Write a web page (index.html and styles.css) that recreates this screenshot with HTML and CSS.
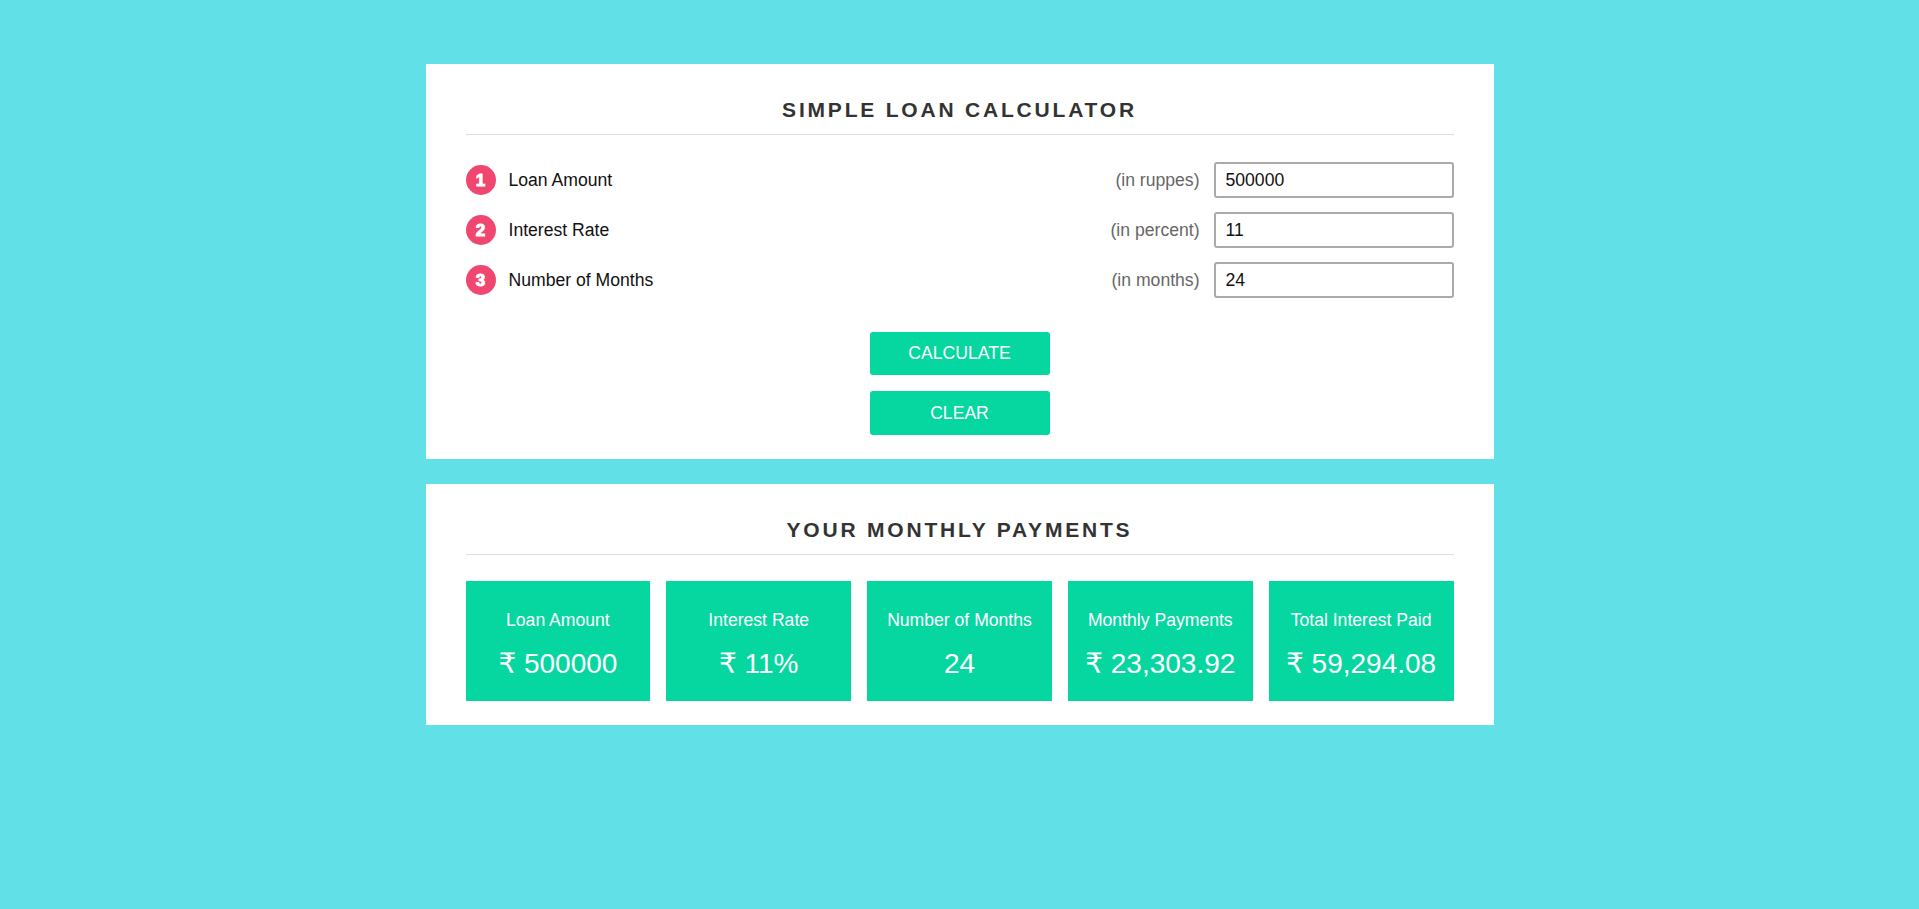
FILE: index.html
```html
<!DOCTYPE html>
<html lang="en">
<head>
<meta charset="utf-8">
<title>Simple Loan Calculator</title>
<link rel="stylesheet" href="styles.css">
</head>
<body>
<main class="page">
  <section class="card">
    <h2 class="card-title">SIMPLE LOAN CALCULATOR</h2>
    <div class="rows">
      <div class="row">
        <span class="num">1</span>
        <span class="label">Loan Amount</span>
        <span class="unit">(in ruppes)</span>
        <input class="field" type="text" value="500000">
      </div>
      <div class="row">
        <span class="num">2</span>
        <span class="label">Interest Rate</span>
        <span class="unit">(in percent)</span>
        <input class="field" type="text" value="11">
      </div>
      <div class="row">
        <span class="num">3</span>
        <span class="label">Number of Months</span>
        <span class="unit">(in months)</span>
        <input class="field" type="text" value="24">
      </div>
    </div>
    <div class="actions">
      <button class="btn" type="button">CALCULATE</button>
      <button class="btn" type="button">CLEAR</button>
    </div>
  </section>

  <section class="card">
    <h2 class="card-title">YOUR MONTHLY PAYMENTS</h2>
    <div class="tiles">
      <div class="tile"><div class="tile-label">Loan Amount</div><div class="tile-value">₹ 500000</div></div>
      <div class="tile"><div class="tile-label">Interest Rate</div><div class="tile-value">₹ 11%</div></div>
      <div class="tile"><div class="tile-label">Number of Months</div><div class="tile-value">24</div></div>
      <div class="tile"><div class="tile-label">Monthly Payments</div><div class="tile-value">₹ 23,303.92</div></div>
      <div class="tile"><div class="tile-label">Total Interest Paid</div><div class="tile-value">₹ 59,294.08</div></div>
    </div>
  </section>
</main>
</body>
</html>
```

FILE: styles.css
```css
* { box-sizing: border-box; }

html, body {
  margin: 0;
  padding: 0;
}

body {
  background: #62e0e8;
  font-family: "Liberation Sans", Arial, "DejaVu Sans", sans-serif;
  font-size: 17.6px;
  color: #111;
  min-height: 909px;
}

.page {
  width: 1068px;
  margin: 0 auto;
  padding-top: 64px;
  display: flex;
  flex-direction: column;
  gap: 25px;
}

.card {
  background: #fff;
  padding: 34px 40px 24px;
}

.card-title {
  margin: 0;
  font-size: 21px;
  line-height: 24px;
  font-weight: bold;
  letter-spacing: 2.8px;
  text-align: center;
  color: #333;
  padding-bottom: 12px;
  border-bottom: 1px solid #dcdcdc;
}

.rows {
  margin-top: 27px;
  display: flex;
  flex-direction: column;
  gap: 14px;
}

.row {
  display: flex;
  align-items: center;
  height: 36px;
}

.num {
  width: 30px;
  height: 30px;
  border-radius: 50%;
  background: #ef476f;
  color: #fff;
  font-weight: bold;
  font-size: 17px;
  line-height: 31px;
  text-align: center;
  -webkit-text-stroke: 1px #fff;
  flex: none;
}

.label {
  margin-left: 13px;
  flex: 1;
  color: #111;
  padding-top: 1px;
}

.unit {
  color: #666;
  margin-right: 14px;
  padding-top: 1px;
}

.field {
  width: 240px;
  height: 36px;
  border: 2px solid #aaa;
  border-radius: 3px;
  padding: 0 10px;
  font-family: inherit;
  font-size: 17.6px;
  color: #111;
  background: #fff;
  outline: none;
}

.actions {
  margin-top: 34px;
  display: flex;
  flex-direction: column;
  align-items: center;
  gap: 16px;
}

.btn {
  width: 180px;
  height: 43px;
  border: none;
  border-radius: 3px;
  background: #06d6a0;
  color: #fff;
  font-family: inherit;
  font-size: 17.6px;
  cursor: pointer;
  padding: 0;
}

.actions .btn:last-child {
  height: 44px;
}

.tiles {
  margin-top: 26px;
  display: grid;
  grid-template-columns: repeat(5, 1fr);
  gap: 16px;
}

.tile {
  background: #06d6a0;
  color: #fff;
  height: 120px;
  padding-top: 29px;
  text-align: center;
}

.tile-label {
  font-size: 17.6px;
  line-height: 20px;
}

.tile-value {
  margin-top: 18px;
  font-size: 28px;
  line-height: 32px;
}
```
